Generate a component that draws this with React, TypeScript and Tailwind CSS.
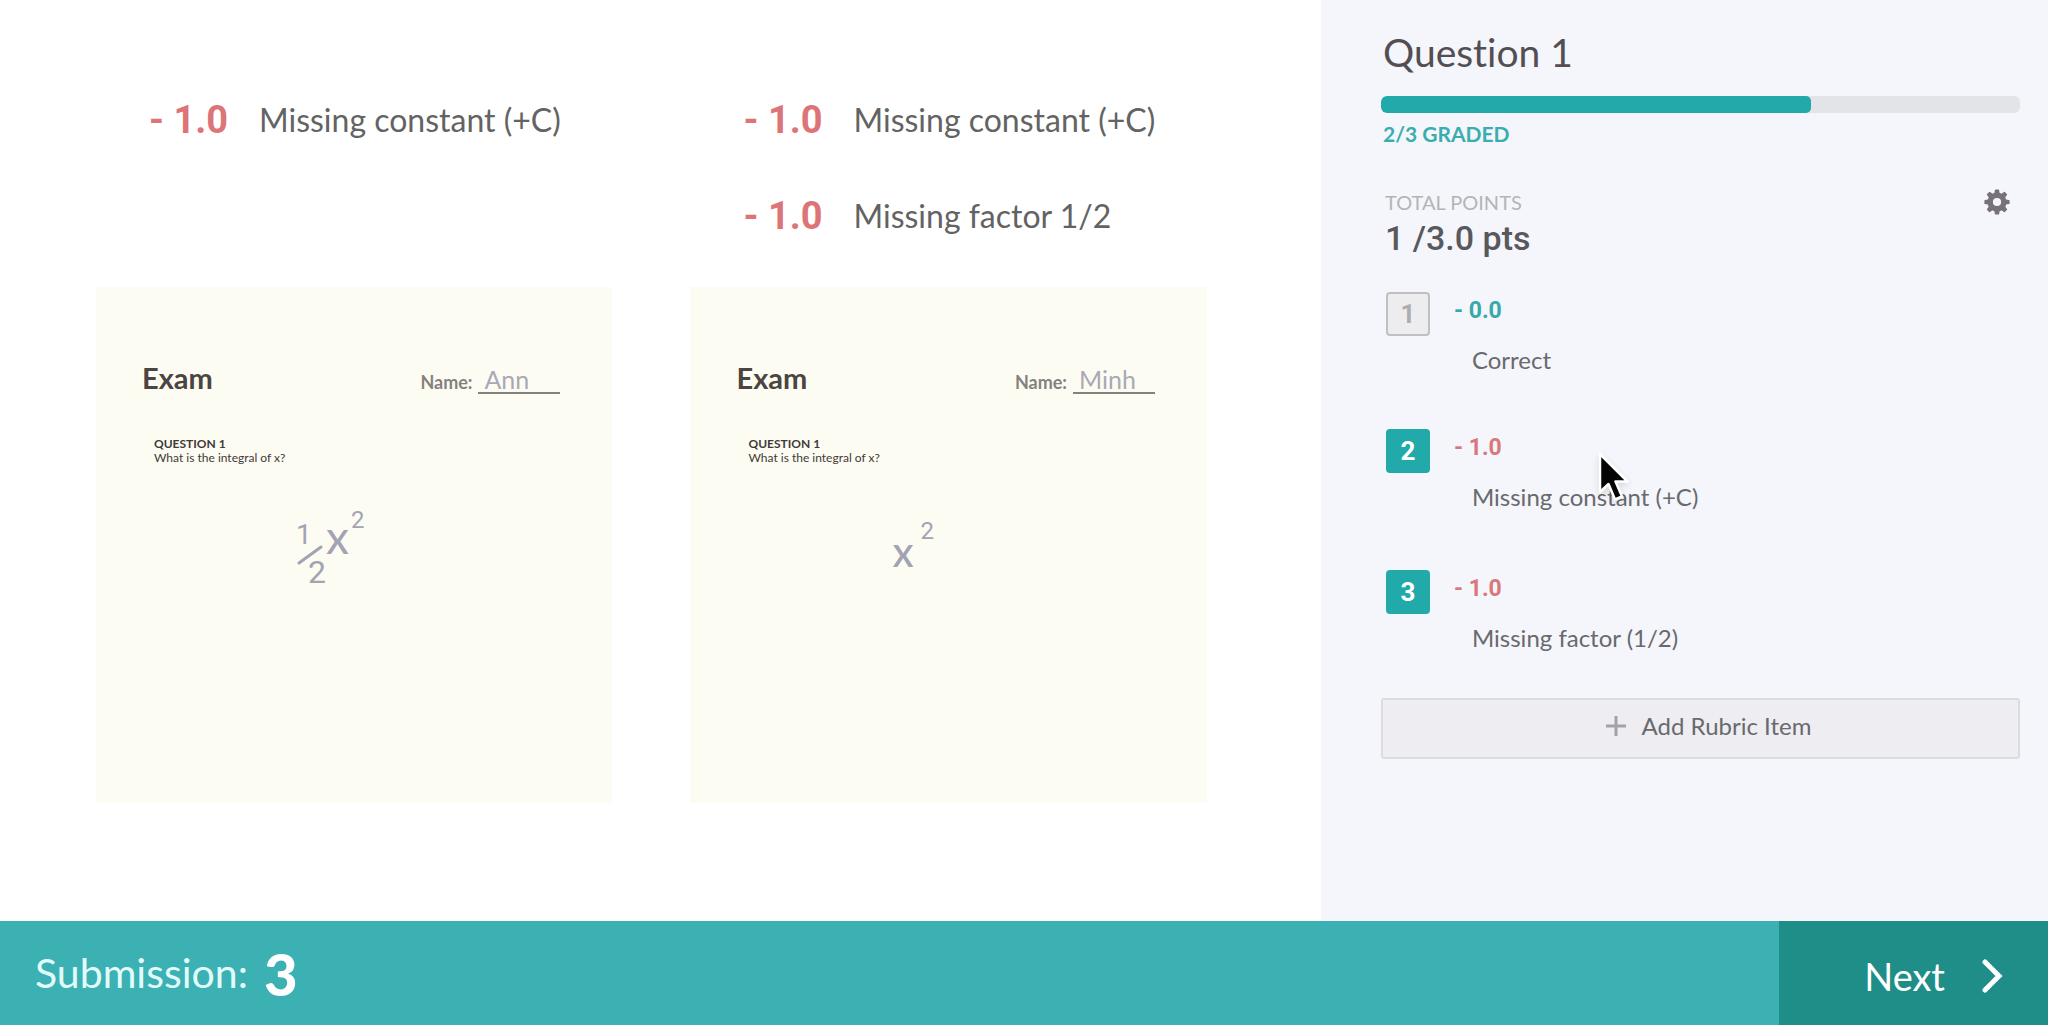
type Deduction = { points: string; label: string };

type RubricItem = {
  key: number;
  points: string;
  label: string;
  applied: boolean;
};

const rubric: RubricItem[] = [
  { key: 1, points: "- 0.0", label: "Correct", applied: false },
  { key: 2, points: "- 1.0", label: "Missing constant (+C)", applied: true },
  { key: 3, points: "- 1.0", label: "Missing factor (1/2)", applied: true },
];

const gearTeeth = [0, 45, 90, 135, 180, 225, 270, 315];

function Gear() {
  return (
    <svg className="size-[26px]" viewBox="0 0 26 26" fill="currentColor" aria-hidden="true">
      <circle cx="13" cy="13" r="6.8" fill="none" stroke="currentColor" strokeWidth="5.4" />
      {gearTeeth.map((angle) => (
        <path key={angle} d="M10.2 5 10.9 1Q11 .4 11.600 .4H14.400Q15 .4 15.100 1L15.800 5Z" transform={`rotate(${angle} 13 13)`} />
      ))}
    </svg>
  );
}

function HalfXSquared() {
  return (
    <div className="relative ml-[200px] mt-12 h-20 w-[70px] font-['Roboto',sans-serif] text-[#a3a3b3]">
      <span className="absolute left-0 top-1.5 text-[28px] leading-8">1</span>
      <svg className="absolute left-0 top-[30px] h-6 w-7" viewBox="0 0 28 24" fill="none" stroke="currentColor" strokeWidth="3" strokeLinecap="round">
        <path d="M3 20 25 4" />
      </svg>
      <span className="absolute left-3 top-[43px] text-[32px] leading-8">2</span>
      <span className="absolute left-[30px] top-1 font-['Lato',sans-serif] text-[46px] leading-10">x</span>
      <span className="absolute left-[55px] top-[-9px] text-[24px] leading-8">2</span>
    </div>
  );
}

function XSquared() {
  return (
    <div className="relative ml-[202px] mt-12 h-20 w-[70px] font-['Roboto',sans-serif] text-[#a3a3b3]">
      <span className="absolute left-0 top-[18px] font-['Lato',sans-serif] text-[42px] font-medium leading-10">x</span>
      <span className="absolute left-7 top-0.5 text-[24px] leading-8">2</span>
    </div>
  );
}

function Submission({
  deductions,
  student,
  answer,
}: {
  deductions: Deduction[];
  student: string;
  answer: React.ReactNode;
}) {
  return (
    <article>
      <ul className="mb-[23px] min-h-48">
        {deductions.map((d) => (
          <li key={d.label} className="flex h-24 items-center pl-[53px]">
            <span className="w-[110px] shrink-0 font-['Roboto',sans-serif] text-[38px] font-bold text-[#dc7478]">{d.points}</span>
            <span className="whitespace-nowrap text-[32px] text-[#636363]">{d.label}</span>
          </li>
        ))}
      </ul>
      <div className="aspect-square bg-[#fdfcf3] pt-[71px]">
        <header className="flex items-baseline justify-between pl-[46px] pr-[52px]">
          <h2 className="text-[29px] font-bold leading-10 text-[#4b4542]">Exam</h2>
          <p className="flex items-end gap-1.5 text-[18px] font-bold leading-6 text-[#85817e]">
            Name:
            <span className="w-[82px] border-b-2 border-[#85817e] pb-0.5 pl-1.5 text-[25px] font-normal leading-[22px] text-[#a9a9b6]">
              {student}
            </span>
          </p>
        </header>
        <div className="mt-[39px] pl-[58px] text-[12px] leading-[14px] text-[#3f3a38]">
          <h3 className="font-bold">QUESTION 1</h3>
          <p>What is the integral of x?</p>
        </div>
        {answer}
      </div>
    </article>
  );
}

function Pointer() {
  return (
    <svg className="pointer-events-none absolute left-[217px] top-[22px] h-[52px] w-9 drop-shadow-md" viewBox="0 0 36 52" aria-hidden="true">
      <path
        d="M2 3V41L10.500 33L17 48.500L24 45.500L17.500 30.500H29.500Z"
        fill="#050505"
        stroke="#fff"
        strokeWidth="2.500"
        strokeLinejoin="round"
      />
    </svg>
  );
}

function RubricRow({ item, children }: { item: RubricItem; children?: React.ReactNode }) {
  return (
    <li className={item.applied ? "relative flex h-[141px] items-start gap-6 pl-[5px]" : "relative flex h-[137px] items-start gap-6 pl-[5px]"}>
      <button
        type="button"
        aria-pressed={item.applied}
        aria-labelledby={`rubric-${item.key}`}
        className={
          item.applied
            ? "size-11 shrink-0 rounded-[4px] bg-[#22a9a9] font-['Roboto',sans-serif] text-[26px] font-bold text-white"
            : "size-11 shrink-0 rounded-[4px] border-2 border-[#c0c0c3] bg-[#ededef] font-['Roboto',sans-serif] text-[26px] font-bold text-[#adadb0]"
        }
      >
        {item.key}
      </button>
      <div id={`rubric-${item.key}`}>
        <p
          className={
            item.applied
              ? "font-['Roboto',sans-serif] text-[23px] font-bold leading-[38px] text-[#d9777b]"
              : "font-['Roboto',sans-serif] text-[23px] font-bold leading-[38px] text-[#36a9aa]"
          }
        >
          {item.points}
        </p>
        <p className="mt-2.5 pl-[18px] text-[24px] leading-10 text-[#69696e]">{item.label}</p>
      </div>
      {children}
    </li>
  );
}

export default function App() {
  return (
    <div className="flex min-h-screen flex-col bg-white font-['Lato',sans-serif] [font-variant-ligatures:none]">
      <div className="flex flex-1">
        <main className="grid flex-1 grid-cols-2 gap-[78px] pl-24 pr-[114px] pt-[72px]">
          <Submission
            student="Ann"
            deductions={[{ points: "- 1.0", label: "Missing constant (+C)" }]}
            answer={<HalfXSquared />}
          />
          <Submission
            student="Minh"
            deductions={[
              { points: "- 1.0", label: "Missing constant (+C)" },
              { points: "- 1.0", label: "Missing factor 1/2" },
            ]}
            answer={<XSquared />}
          />
        </main>

        <aside className="w-[35.5%] bg-[#f5f6fb] pl-[60px] pr-7 pt-7">
          <h1 className="pl-0.5 text-[39px] leading-[48px] text-[#534e54]">Question 1</h1>
          <div
            role="progressbar"
            aria-label="Graded submissions"
            aria-valuenow={2}
            aria-valuemax={3}
            className="mt-5 h-[17px] overflow-hidden rounded-[6px] bg-[#e3e4e7]"
          >
            <div className="h-full w-[67.3%] rounded-[5px] bg-[#22a9a9]" />
          </div>
          <p className="mt-[7px] pl-0.5 text-[21px] font-bold leading-7 text-[#3aaeae]">2/3 GRADED</p>

          <div className="mt-10 flex items-start justify-between pl-1 pr-2.5">
            <div>
              <p className="text-[20px] leading-7 text-[#b4b4b8]">TOTAL POINTS</p>
              <p className="pt-0.5 font-['Roboto',sans-serif] text-[34px] font-medium leading-10 text-[#58585d]">1 /3.0 pts</p>
            </div>
            <button type="button" aria-label="Rubric settings" className="pt-px text-[#77727a]">
              <Gear />
            </button>
          </div>

          <ul className="mt-[34px]">
            {rubric.map((item) => (
              <RubricRow key={item.key} item={item}>
                {item.key === 2 && <Pointer />}
              </RubricRow>
            ))}
          </ul>

          <button
            type="button"
            className="-mt-[13px] flex h-[61px] w-full items-center justify-center gap-4 rounded-[3px] border-2 border-[#dcdce0] bg-[#eeeef2] pb-1.5 pl-4 text-[24px] text-[#69696e]"
          >
            <svg className="size-5 text-[#a3a3a7]" viewBox="0 0 20 20" fill="none" stroke="currentColor" strokeWidth="3" aria-hidden="true">
              <path d="M10 0V20M0 10H20" />
            </svg>
            Add Rubric Item
          </button>
        </aside>
      </div>

      <footer className="flex h-[104px] items-stretch justify-between bg-[#3bb1b3]">
        <p className="flex items-center gap-4 pl-[35px] text-[41px] text-[#e2fbfb]">
          Submission: <strong className="text-[58px] font-black text-white">3</strong>
        </p>
        <button type="button" className="flex w-[269px] items-center justify-end gap-9 bg-[#1f8e88] pr-[45px] pt-1.5 text-[38px] text-white">
          Next
          <svg className="h-[34px] w-[22px]" viewBox="0 0 22 34" fill="none" stroke="currentColor" strokeWidth="5" strokeLinecap="round" aria-hidden="true">
            <path d="M4 3 18 17 4 31" />
          </svg>
        </button>
      </footer>
    </div>
  );
}
